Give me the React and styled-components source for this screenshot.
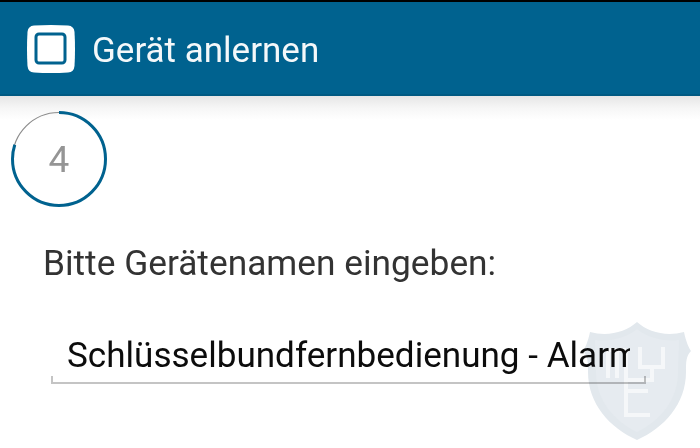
import styled, { createGlobalStyle } from "styled-components";

const GlobalStyle = createGlobalStyle`
    html, body {
        margin: 0;
        padding: 0;
        background-color: #ffffff;
    }
    body {
        font-family: Roboto, "Liberation Sans", sans-serif;
    }
`

function AppLogo() {
    return (
        <svg width="48" height="48" viewBox="0 0 48 48">
            <path fill="#ffffff" d="M7 0.5 Q24 -0.5 41 0.5 Q47 1 47.5 7 Q48.5 24 47.5 41 Q47 47 41 47.5 Q24 48.5 7 47.5 Q1 47 0.5 41 Q-0.5 24 0.5 7 Q1 1 7 0.5 Z" />
            <rect x="9" y="9" width="29" height="29" rx="3" fill="none" stroke="#00628f" strokeWidth="3" />
        </svg>
    )
}

function StepRing() {
    return (
        <RingBox>
            <svg width="96" height="96" viewBox="0 0 96 96">
                <circle cx="48" cy="48" r="46.5" fill="none" stroke="#8c8c8c" strokeWidth="1.2" />
                <circle
                    cx="48"
                    cy="48"
                    r="46.5"
                    fill="none"
                    stroke="#00628f"
                    strokeWidth="3"
                    pathLength="100"
                    strokeDasharray="80 100"
                    transform="rotate(-90 48 48)"
                />
            </svg>
            <RingNumber>4</RingNumber>
        </RingBox>
    )
}

function Watermark() {
    return (
        <WatermarkBox>
            <svg width="110" height="122" viewBox="0 0 110 122">
                <path
                    fill="#e2e8ed"
                    d="M55 2 C66 12 84 17 102 12 C104 22 107 28 109 31 C104 36 104 42 104 52 C104 84 82 108 55 120 C28 108 6 84 6 52 C6 42 6 36 1 31 C3 28 6 22 8 12 C26 17 44 12 55 2 Z"
                />
                <path
                    fill="#e6ebf0"
                    d="M55 9 C66 18 82 22 97 20 C97 30 96 40 96 52 C96 80 78 101 55 112 C32 101 14 80 14 52 C14 40 13 30 13 20 C28 22 44 18 55 9 Z"
                />
                <path
                    fill="none"
                    stroke="#f5f7f9"
                    strokeWidth="4"
                    d="M26 58 V30 M35 58 V30 M44 58 V30 M26 30 H44 M58 27 V47 H81 V27 M70 47 V60 H44 V95 H68 M44 71 H66"
                />
            </svg>
        </WatermarkBox>
    )
}

export default function App() {
    return (
        <Screen>
            <GlobalStyle />
            <Header>
                <AppLogo />
                <Title>Gerät anlernen</Title>
            </Header>
            <Content>
                <StepRing />
                <Label>Bitte Gerätenamen eingeben:</Label>
                <NameField>
                    <NameText>Schlüsselbundfernbedienung - Alarm</NameText>
                </NameField>
            </Content>
            <Watermark />
        </Screen>
    )
}

const Screen = styled.div`
    position: relative;
    width: 700px;
    height: 448px;
    overflow: hidden;
    background-color: #ffffff;
`
const Header = styled.div`
    height: 96px;
    box-sizing: border-box;
    border-top: 2px solid #000000;
    border-bottom: 2px solid #005a83;
    padding: 2px 0 0 27px;
    display: flex;
    align-items: center;
    gap: 17px;
    background-color: #00628f;
`
const Title = styled.div`
    margin-top: 2px;
    font-size: 35px;
    font-weight: 400;
    color: #f4f8fa;
`
const Content = styled.div`
    height: 352px;
    box-sizing: border-box;
    padding: 15px 0 0 11px;
    background: linear-gradient(#e6e6e6 0, #f6f6f6 12px, #ffffff 24px);
    background-size: 100% 24px;
    background-repeat: no-repeat;
`
const RingBox = styled.div`
    position: relative;
    width: 96px;
    height: 96px;
`
const RingNumber = styled.div`
    position: absolute;
    inset: 0;
    display: flex;
    align-items: center;
    justify-content: center;
    font-size: 37px;
    color: #959595;
`
const Label = styled.div`
    margin: 35px 0 0 32px;
    font-size: 35.3px;
    line-height: 42px;
    color: #333333;
`
const NameField = styled.div`
    position: relative;
    margin: 50px 0 0 40px;
    width: 595px;
    height: 50px;
    box-sizing: border-box;
    padding: 0 16px;
    &::after {
        content: "";
        position: absolute;
        left: 0;
        right: 0;
        bottom: 0;
        height: 6px;
        border: 2px solid #c4c4c4;
        border-top: none;
    }
`
const NameText = styled.div`
    overflow: hidden;
    white-space: nowrap;
    font-size: 35.1px;
    line-height: 42px;
    color: #0c0c0c;
`
const WatermarkBox = styled.div`
    position: absolute;
    left: 582px;
    top: 320px;
    mix-blend-mode: multiply;
`
